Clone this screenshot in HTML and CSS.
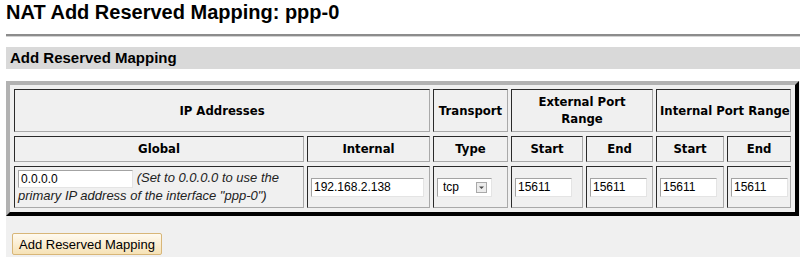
FILE: index.html
```html
<!DOCTYPE html>
<html lang="en">
<head>
  <meta charset="UTF-8">
  <title>NAT Add Reserved Mapping</title>
  <link rel="stylesheet" href="styles.css">
</head>
<body>

  <div class="page">
    <h1 class="title">NAT Add Reserved Mapping: ppp-0</h1>
    <div class="rule"></div>
    <h2 class="section-bar">Add Reserved Mapping</h2>

    <form class="mapping-form" action="#" method="post">
      <table class="mapping">
        <colgroup>
          <col class="col-global">
          <col class="col-internal">
          <col class="col-type">
          <col class="col-ext-start">
          <col class="col-ext-end">
          <col class="col-int-start">
          <col class="col-int-end">
        </colgroup>
        <tr class="group-row">
          <th colspan="2">IP Addresses</th>
          <th>Transport</th>
          <th colspan="2">External Port<br>Range</th>
          <th colspan="2" class="nowrap">Internal Port Range</th>
        </tr>
        <tr class="col-row">
          <th>Global</th>
          <th>Internal</th>
          <th>Type</th>
          <th>Start</th>
          <th>End</th>
          <th>Start</th>
          <th>End</th>
        </tr>
        <tr class="data-row">
          <td class="cell-global">
            <input class="ip-input global-input" type="text" name="global_ip" value="0.0.0.0">
            <span class="note">(Set to 0.0.0.0 to use the primary IP address of the interface "ppp-0")</span>
          </td>
          <td><input class="ip-input" type="text" name="internal_ip" value="192.168.2.138"></td>
          <td>
            <span class="select-wrap">
              <select class="type-select" name="type">
                <option>tcp</option>
                <option>udp</option>
              </select>
              <svg class="select-arrow" width="11" height="11" viewBox="0 0 11 11">
                <rect x="0.5" y="0.5" width="10" height="10" fill="#ececec" stroke="#a9a9a9"/>
                <path d="M3 4.5h5L5.5 7z" fill="#4a4a4a"/>
              </svg>
            </span>
          </td>
          <td><input class="port-input" type="text" name="ext_start" value="15611"></td>
          <td><input class="port-input" type="text" name="ext_end" value="15611"></td>
          <td><input class="port-input" type="text" name="int_start" value="15611"></td>
          <td><input class="port-input" type="text" name="int_end" value="15611"></td>
        </tr>
      </table>

      <div class="actions">
        <button class="add-button" type="submit">Add Reserved Mapping</button>
      </div>
    </form>
  </div>

</body>
</html>
```

FILE: styles.css
```css
body {
  margin: 0;
  background-color: #fff;
  color: #000;
  font-family: "Liberation Sans", Arial, sans-serif;
}

.page {
  padding-left: 6px;
}

.title {
  margin: 0;
  font-size: 20px;
  line-height: 24px;
  font-weight: bold;
}

.rule {
  margin-top: 10px;
  border-top: 2px solid #8c8c8c;
  border-bottom: 1px solid #d2d2d2;
}

.section-bar {
  margin: 10px 0 0 0;
  padding-left: 4px;
  height: 22px;
  line-height: 22px;
  font-size: 15px;
  font-weight: bold;
  background-color: #d9d9d9;
}

.mapping-form {
  margin-top: 12px;
  background-color: #f0f0f0;
}

.mapping {
  width: 793px;
  table-layout: fixed;
  border-collapse: separate;
  border-spacing: 3px 4px;
  padding: 0 1px;
  border: 4px solid;
  border-color: #b2b2b2 #000 #000 #b2b2b2;
  background-color: #f0f0f0;
}

.col-global { width: 290px; }
.col-internal { width: 123px; }
.col-type { width: 75px; }
.col-ext-start { width: 72px; }
.col-ext-end { width: 67px; }
.col-int-start { width: 68px; }
.col-int-end { width: 64px; }

.mapping th,
.mapping td {
  border: 1px solid;
  border-color: #2a2a2a #a9a9a9 #a9a9a9 #2a2a2a;
  padding: 4px 3px 3px;
}

.mapping th {
  font-family: "DejaVu Sans", Tahoma, sans-serif;
  font-size: 11.7px;
  line-height: 17px;
  font-weight: bold;
  text-align: center;
}

.nowrap {
  white-space: nowrap;
}

.mapping td {
  padding: 3px;
  vertical-align: middle;
  font-size: 13px;
  line-height: 16px;
}

.mapping .cell-global {
  vertical-align: top;
}

.ip-input,
.port-input,
.type-select {
  box-sizing: border-box;
  height: 19px;
  margin: 0;
  padding: 0 2px;
  border: 1px solid;
  border-color: #a3a3a3 #e4e4e4 #e4e4e4 #a3a3a3;
  background-color: #fff;
  font-family: "Liberation Sans", Arial, sans-serif;
  font-size: 12px;
  color: #000;
  vertical-align: middle;
}

.ip-input {
  width: 113px;
}

.global-input {
  width: 115px;
  height: 18px;
}

.port-input {
  width: 57px;
}

.note {
  font-style: italic;
  color: #222;
}

.select-wrap {
  position: relative;
  display: inline-block;
  vertical-align: middle;
}

.type-select {
  display: block;
  width: 55px;
  padding-left: 5px;
  appearance: none;
  -webkit-appearance: none;
  border-radius: 0;
}

.select-arrow {
  position: absolute;
  top: 4px;
  right: 5px;
  pointer-events: none;
}

.actions {
  padding: 17px 0 2px 6px;
}

.add-button {
  height: 22px;
  padding: 0 6px;
  border: 1px solid #d8b678;
  border-radius: 2px;
  background: linear-gradient(#fffaf0, #f6e2b6);
  font-family: "Liberation Sans", Arial, sans-serif;
  font-size: 13px;
  color: #000;
  cursor: pointer;
}
```
